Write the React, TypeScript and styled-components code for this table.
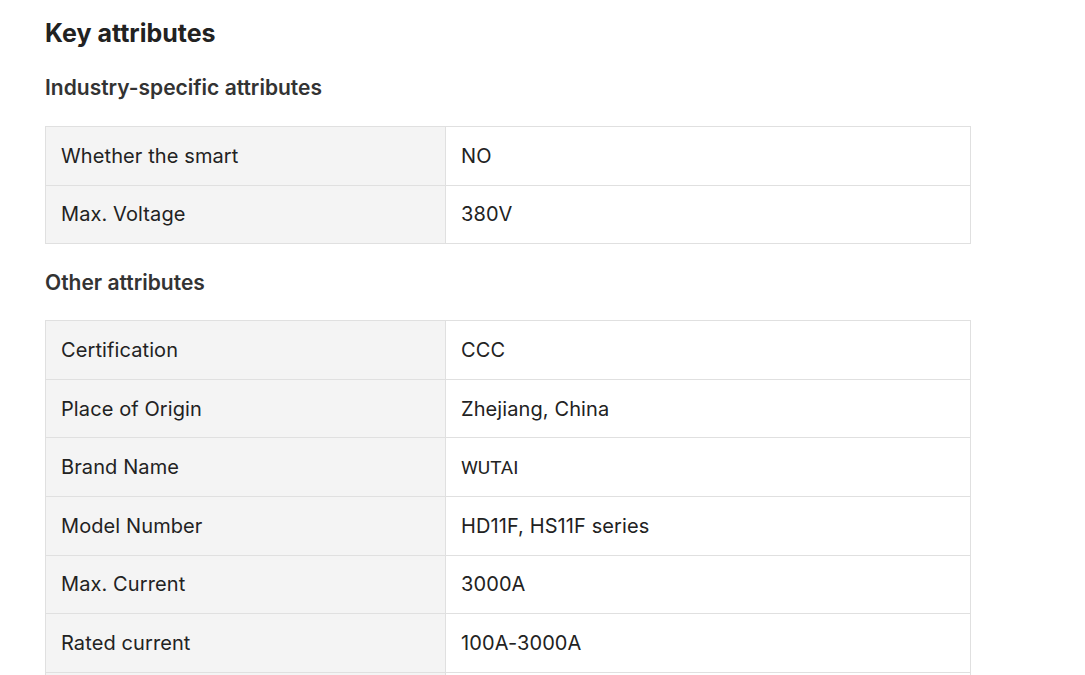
import styled, { createGlobalStyle } from "styled-components"

const GlobalStyle = createGlobalStyle`
    body {
        margin: 0;
        background: #fff;
        font-family: Inter, "Noto Sans", sans-serif;
        color: #222;
    }
`

const Wrapper = styled.div`
    padding: 17px 0 0 45px;
    width: 926px;
`

const Title = styled.h2`
    margin: 0;
    font-size: 25px;
    line-height: 33px;
    font-weight: 700;
    color: #222;
`

const SubTitle = styled.h3`
    margin: 0;
    padding: ${props => (props.$first ? "19px 0 19px" : "20px 0 18px")};
    font-size: 21px;
    line-height: 38px;
    font-weight: 600;
    color: #333;
`

const Table = styled.div`
    display: grid;
    grid-template-columns: 400px 1fr;
    border-top: 1px solid #e0e0e0;
    border-left: 1px solid #e0e0e0;
`

const Cell = styled.div`
    display: flex;
    align-items: center;
    height: 57.6px;
    padding: 0 15px;
    font-size: ${props => (props.$alt ? "19px" : "20px")};
    letter-spacing: ${props => (props.$alt ? "0" : "0.1px")};
    color: #222;
    background: ${props => (props.$label ? "#f4f4f4" : "#fff")};
    border-right: 1px solid #e0e0e0;
    border-bottom: 1px solid #e0e0e0;
    font-family: ${props => (props.$alt ? "Roboto, sans-serif" : "inherit")};
`

const industry = [
    ["Whether the smart", "NO"],
    ["Max. Voltage", "380V"],
]

const other = [
    ["Certification", "CCC"],
    ["Place of Origin", "Zhejiang, China"],
    ["Brand Name", "WUTAI"],
    ["Model Number", "HD11F, HS11F series"],
    ["Max. Current", "3000A"],
    ["Rated current", "100A-3000A"],
    ["", ""],
]

const AttrTable = ({ rows }: { rows: string[][] }) => (
    <Table>
        {rows.map(([k, v], i) => [
            <Cell key={i + "-k"} $label>
                {k}
            </Cell>,
            <Cell key={i + "-v"} $alt={v === "WUTAI"}>
                {v}
            </Cell>,
        ])}
    </Table>
)

const App = () => (
    <>
        <GlobalStyle />
        <Wrapper>
            <Title>Key attributes</Title>
            <SubTitle $first>Industry-specific attributes</SubTitle>
            <AttrTable rows={industry} />
            <SubTitle>Other attributes</SubTitle>
            <AttrTable rows={other} />
        </Wrapper>
    </>
)

export default App
